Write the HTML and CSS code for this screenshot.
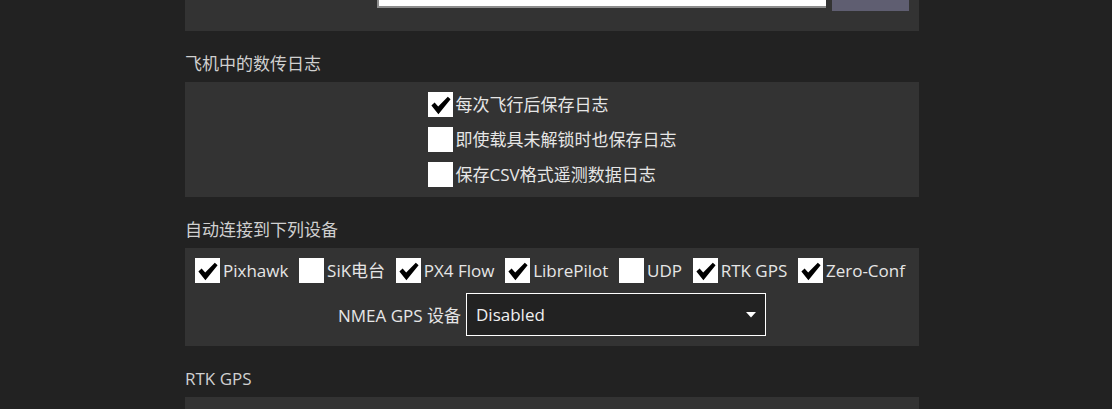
FILE: index.html
```html
<!DOCTYPE html>
<html lang="zh">
<head>
<meta charset="utf-8">
<title>设置</title>
<link rel="stylesheet" href="styles.css">
</head>
<body>
<svg width="0" height="0" class="defs">
  <defs>
    <symbol id="chk" viewBox="0 0 25 25">
      <path d="M3.4 13.4 L6.6 10.6 L10.2 14.4 L19.8 4.8 L22.6 7.2 L10.4 22.2 Z" fill="#000"/>
    </symbol>
  </defs>
</svg>
<main class="page">
  <section class="panel panel-top">
    <div class="top-row">
      <div class="text-field"></div>
      <div class="btn"></div>
    </div>
  </section>

  <h2 class="heading">飞机中的数传日志</h2>
  <section class="panel">
    <div class="check-col">
      <label class="cb"><span class="box"><svg><use href="#chk"/></svg></span><span class="lbl">每次飞行后保存日志</span></label>
      <label class="cb"><span class="box"></span><span class="lbl">即使载具未解锁时也保存日志</span></label>
      <label class="cb"><span class="box"></span><span class="lbl">保存CSV格式遥测数据日志</span></label>
    </div>
  </section>

  <h2 class="heading">自动连接到下列设备</h2>
  <section class="panel">
    <div class="check-row">
      <label class="cb"><span class="box"><svg><use href="#chk"/></svg></span><span class="lbl">Pixhawk</span></label>
      <label class="cb"><span class="box"></span><span class="lbl">SiK电台</span></label>
      <label class="cb"><span class="box"><svg><use href="#chk"/></svg></span><span class="lbl">PX4 Flow</span></label>
      <label class="cb"><span class="box"><svg><use href="#chk"/></svg></span><span class="lbl">LibrePilot</span></label>
      <label class="cb"><span class="box"></span><span class="lbl">UDP</span></label>
      <label class="cb"><span class="box"><svg><use href="#chk"/></svg></span><span class="lbl">RTK GPS</span></label>
      <label class="cb"><span class="box"><svg><use href="#chk"/></svg></span><span class="lbl">Zero-Conf</span></label>
    </div>
    <div class="nmea-row">
      <span class="lbl">NMEA GPS 设备</span>
      <div class="combo">
        <span class="combo-text">Disabled</span>
        <svg class="arrow" width="10" height="6" viewBox="0 0 10 6"><path d="M0 0 H10 L5 5.5 Z" fill="#fff"/></svg>
      </div>
    </div>
  </section>

  <h2 class="heading">RTK GPS</h2>
  <section class="panel panel-bottom"></section>
</main>
</body>
</html>
```

FILE: styles.css
```css
html, body {
  margin: 0;
  padding: 0;
  background: #222222;
  overflow: hidden;
}

.defs {
  position: absolute;
  width: 0;
  height: 0;
}

.page {
  width: 734px;
  margin-left: 185px;
  font-family: "Open Sans", "Noto Sans CJK SC", sans-serif;
  font-size: 17px;
  color: #e6e6e6;
}

.panel {
  background: #333333;
  padding: 10px;
  box-sizing: border-box;
}

.panel-top {
  margin-top: -34px;
  padding-bottom: 20px;
}

.top-row {
  display: flex;
  align-items: center;
  justify-content: flex-end;
  gap: 6px;
}

.text-field {
  width: 449px;
  height: 29px;
  background: #ffffff;
  border-left: 2px solid #8c8c8c;
  border-bottom: 2px solid #8c8c8c;
  box-sizing: border-box;
}

.btn {
  width: 77px;
  height: 35px;
  background: #5f5e71;
}

.heading {
  margin: 0;
  padding: 21px 0 6px;
  font-weight: normal;
  font-size: 17px;
  line-height: 24px;
  color: #d0d0d0;
}

.check-col {
  display: flex;
  flex-direction: column;
  align-items: flex-start;
  gap: 10px;
  width: max-content;
  margin: 0 auto;
}

.cb {
  display: flex;
  align-items: center;
  gap: 3px;
  height: 25px;
  line-height: 25px;
  white-space: nowrap;
}

.box {
  width: 25px;
  height: 25px;
  background: #ffffff;
  flex: none;
  display: block;
}

.box svg {
  display: block;
  width: 25px;
  height: 25px;
}

.lbl {
  color: #e6e6e6;
}

.check-row {
  display: flex;
  gap: 10.7px;
  align-items: center;
}

.nmea-row {
  margin-top: 10px;
  display: flex;
  align-items: center;
  justify-content: center;
  gap: 5px;
}

.combo {
  width: 300px;
  height: 43px;
  box-sizing: border-box;
  border: 1px solid #ffffff;
  background: #222222;
  display: flex;
  align-items: center;
  justify-content: space-between;
  padding: 0 9px 0 9px;
}

.combo-text {
  color: #f0f0f0;
}

.arrow {
  display: block;
}

.panel-bottom {
  height: 40px;
}
```
